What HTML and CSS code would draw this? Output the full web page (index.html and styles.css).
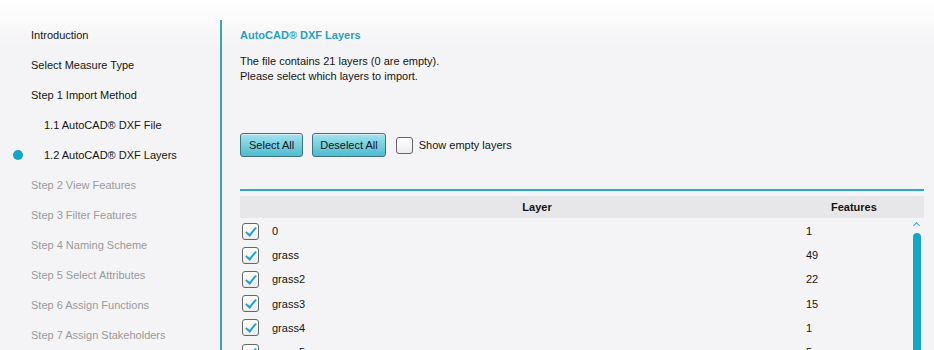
FILE: index.html
```html
<!DOCTYPE html>
<html lang="en">
<head>
    <meta charset="UTF-8">
    <meta name="viewport" content="width=device-width, initial-scale=1.0">
    <title>AutoCAD DXF Layers</title>
    <link rel="stylesheet" href="styles.css">
</head>
<body>
    <div class="page">
        <ul class="steps">
            <li class="step">Introduction</li>
            <li class="step">Select Measure Type</li>
            <li class="step">Step 1 Import Method</li>
            <li class="step sub">1.1 AutoCAD® DXF File</li>
            <li class="step sub current">1.2 AutoCAD® DXF Layers</li>
            <li class="step off">Step 2 View Features</li>
            <li class="step off">Step 3 Filter Features</li>
            <li class="step off">Step 4 Naming Scheme</li>
            <li class="step off">Step 5 Select Attributes</li>
            <li class="step off">Step 6 Assign Functions</li>
            <li class="step off">Step 7 Assign Stakeholders</li>
        </ul>

        <div class="main">
            <h2 class="title">AutoCAD® DXF Layers</h2>
            <p class="info">The file contains 21 layers (0 are empty).<br>Please select which layers to import.</p>

            <div class="tools">
                <button class="btn">Select All</button>
                <button class="btn">Deselect All</button>
                <label class="toggle"><span class="box"></span>Show empty layers</label>
            </div>

            <div class="table">
                <div class="head">
                    <span class="head-layer">Layer</span>
                    <span class="head-count">Features</span>
                </div>
                <div class="rows">
                    <div class="row"><span class="box checked"></span><span>0</span><span>1</span></div>
                    <div class="row"><span class="box checked"></span><span>grass</span><span>49</span></div>
                    <div class="row"><span class="box checked"></span><span>grass2</span><span>22</span></div>
                    <div class="row"><span class="box checked"></span><span>grass3</span><span>15</span></div>
                    <div class="row"><span class="box checked"></span><span>grass4</span><span>1</span></div>
                    <div class="row"><span class="box checked"></span><span>grass5</span><span>5</span></div>
                    <div class="row"><span class="box checked"></span><span>grass6</span><span>3</span></div>
                    <div class="scroll">
                        <span class="caret"></span>
                        <span class="thumb"></span>
                    </div>
                </div>
            </div>
        </div>
    </div>
</body>
</html>
```

FILE: styles.css
```css
html, body {
    height: 100%;
}
body {
    margin: 0;
    font-family: "Liberation Sans", Arial, sans-serif;
    font-size: 11px;
    color: #141414;
    background: linear-gradient(#ffffff 0, #f4f4f6 45px) no-repeat;
    background-color: #f4f4f6;
    overflow: hidden;
}
.page {
    display: flex;
    height: 100%;
}
.steps {
    list-style: none;
    margin: 20px 0 0 0;
    padding: 0;
    width: 220px;
    flex: none;
    border-right: 2px solid #35a6c0;
}
.step {
    position: relative;
    height: 30px;
    line-height: 30px;
    padding-left: 31px;
}
.step.sub {
    padding-left: 44px;
}
.step.off {
    color: #9a9a9a;
}
.step.current::before {
    content: "";
    position: absolute;
    left: 13px;
    top: 10px;
    width: 10px;
    height: 10px;
    border-radius: 50%;
    background-color: #16a3c9;
}
.main {
    flex: 1;
    padding: 20px 10px 0 18px;
    min-width: 0;
}
.title {
    margin: 0;
    font-size: 11px;
    line-height: 30px;
    color: #2a9ec2;
}
.info {
    margin: 4px 0 0 0;
    line-height: 15px;
}
.tools {
    display: flex;
    align-items: center;
    margin-top: 49px;
    height: 24px;
}
.btn {
    height: 24px;
    padding: 0 8px;
    margin-right: 9px;
    font-family: inherit;
    font-size: 11px;
    color: #141414;
    border: 1px solid #3d7380;
    border-radius: 3px;
    background: linear-gradient(#a3e3ee, #4dbccf);
    box-shadow: inset 0 1px 0 rgba(255, 255, 255, 0.5);
}
.btn + .btn {
    padding: 0 7px;
}
.toggle {
    display: flex;
    align-items: center;
    gap: 6px;
    margin-left: 1px;
}
.box {
    display: block;
    width: 15px;
    height: 15px;
    border: 1px solid #666;
    border-radius: 3px;
    background: linear-gradient(#ffffff, #ececec);
    position: relative;
}
.box.checked::after {
    content: "";
    position: absolute;
    left: 5px;
    top: 1px;
    width: 4px;
    height: 9px;
    border: solid #1fa6cc;
    border-width: 0 2px 2px 0;
    transform: rotate(40deg);
}
.table {
    margin-top: 32px;
    border-top: 2px solid #2fa6c4;
    padding-top: 5px;
}
.head {
    display: flex;
    height: 22px;
    line-height: 22px;
    background-color: #e7e7e9;
    font-weight: bold;
}
.head-layer {
    width: 594px;
    text-align: center;
}
.head-count {
    margin-left: -3px;
}
.rows {
    position: relative;
    padding-top: 1px;
}
.row {
    display: grid;
    grid-template-columns: 32px 534px 1fr;
    align-items: center;
    height: 24.2px;
}
.row .box {
    margin-left: 2px;
}
.scroll {
    position: absolute;
    right: 3px;
    top: 0;
    bottom: 0;
    width: 8px;
}
.caret {
    position: absolute;
    left: 1px;
    top: 5px;
    width: 4px;
    height: 4px;
    border: solid #36a9c8;
    border-width: 1.5px 0 0 1.5px;
    transform: rotate(45deg);
}
.thumb {
    position: absolute;
    left: 0;
    top: 15px;
    bottom: -40px;
    width: 8px;
    border-radius: 4px;
    background-color: #12a6c9;
}
```
